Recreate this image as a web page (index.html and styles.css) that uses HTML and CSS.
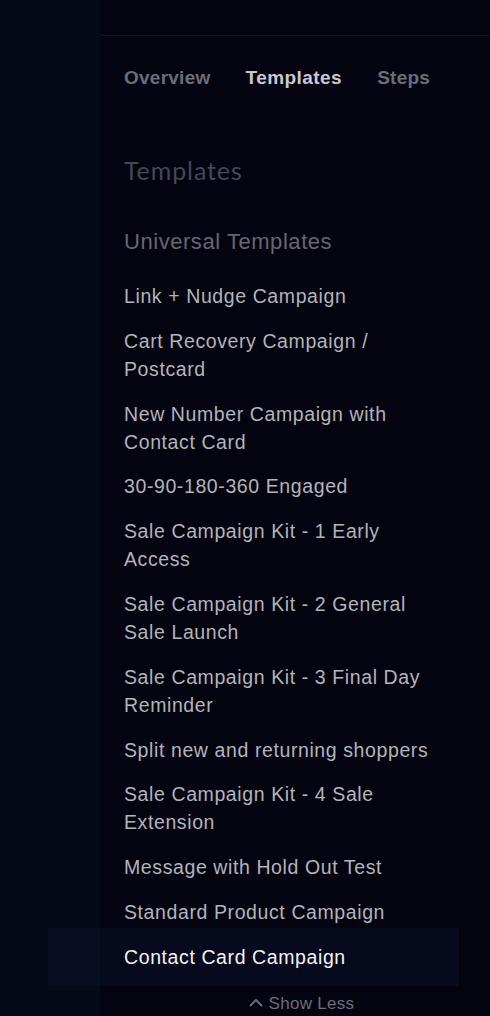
FILE: index.html
```html
<!DOCTYPE html>
<html lang="en">
<head>
<meta charset="utf-8">
<title>Templates</title>
<link rel="stylesheet" href="styles.css">
</head>
<body>
<div class="app">
  <aside class="sidebar"></aside>
  <main class="panel">
    <div class="topbar"></div>
    <div class="content">
      <nav class="tabs">
        <span class="tab">Overview</span>
        <span class="tab tab-active">Templates</span>
        <span class="tab">Steps</span>
      </nav>
      <h1 class="title">Templates</h1>
      <h2 class="section">Universal Templates</h2>
      <ul class="list">
        <li class="item">Link + Nudge Campaign</li>
        <li class="item">Cart Recovery Campaign / Postcard</li>
        <li class="item">New Number Campaign with Contact Card</li>
        <li class="item">30-90-180-360 Engaged</li>
        <li class="item">Sale Campaign Kit - 1 Early Access</li>
        <li class="item">Sale Campaign Kit - 2 General Sale Launch</li>
        <li class="item">Sale Campaign Kit - 3 Final Day Reminder</li>
        <li class="item">Split new and returning shoppers</li>
        <li class="item">Sale Campaign Kit - 4 Sale Extension</li>
        <li class="item">Message with Hold Out Test</li>
        <li class="item">Standard Product Campaign</li>
        <li class="item item-active">Contact Card Campaign</li>
      </ul>
      <div class="more">
        <svg class="caret" width="14" height="9" viewBox="0 0 14 9" aria-hidden="true"><path d="M1.5 7.5 L7 2 L12.5 7.5" fill="none" stroke="currentColor" stroke-width="1.8" stroke-linecap="round" stroke-linejoin="round"/></svg>
        <span>Show Less</span>
      </div>
    </div>
  </main>
</div>
</body>
</html>
```

FILE: styles.css
```css
html, body {
  margin: 0;
  padding: 0;
  height: 100%;
  background: #03040f;
}

body {
  font-family: "Liberation Sans", Arial, Helvetica, sans-serif;
  overflow: hidden;
}

.app {
  display: flex;
  min-height: 100%;
}

.sidebar {
  width: 100px;
  flex: 0 0 100px;
  background: #050a17;
}

.panel {
  flex: 1;
  background: #03040f;
  min-height: 1016px;
}

.topbar {
  height: 35px;
  border-bottom: 1px solid #131623;
}

.content {
  padding: 30px 11px 0 24px;
}

.tabs {
  display: flex;
  gap: 35px;
  height: 24px;
  align-items: center;
}

.tab {
  font-size: 19px;
  font-weight: 700;
  letter-spacing: 0.25px;
  line-height: 24px;
  color: #6b6e79;
}

.tab-active {
  color: #c9c9cd;
  letter-spacing: 0.45px;
}

.title {
  margin: 65px 0 0;
  font-family: Lato, "Open Sans", sans-serif;
  font-weight: 400;
  font-size: 25px;
  letter-spacing: 0.9px;
  line-height: 30px;
  color: #444856;
}

.section {
  margin: 43px 0 0;
  font-size: 22px;
  font-weight: 400;
  letter-spacing: 0.55px;
  line-height: 28px;
  color: #65676f;
}

.list {
  list-style: none;
  margin: 18px 0 0;
  padding: 0;
  width: 313px;
}

.item {
  font-size: 19.5px;
  letter-spacing: 0.6px;
  line-height: 28px;
  padding: 8px 0 8.8px;
  color: #b3b4ba;
}

.item-active {
  color: #f3f3f5;
  background: rgba(40, 50, 120, 0.12);
  margin: -6.5px -22px -6.5px -76px;
  padding: 14.5px 22px 15.3px 76px;
}

.more {
  margin-top: 14px;
  display: flex;
  justify-content: center;
  align-items: center;
  gap: 6px;
  font-size: 17px;
  letter-spacing: 0.3px;
  line-height: 20px;
  color: #6b6e78;
}

.caret {
  display: block;
  margin-top: -2px;
}
```
